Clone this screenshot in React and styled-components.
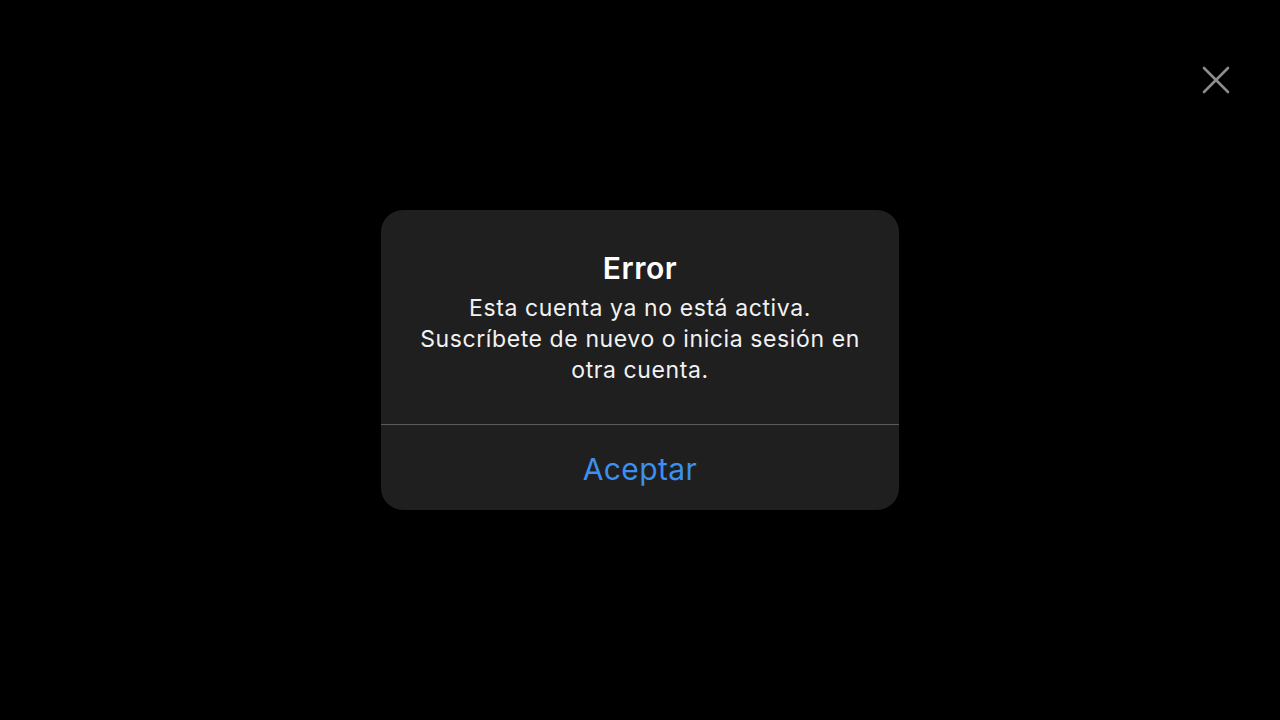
import React from "react";
import styled, { createGlobalStyle } from "styled-components";

const Global = createGlobalStyle`
  html, body {
    margin: 0;
    padding: 0;
    background: #000;
  }
  body {
    font-family: Inter, "Noto Sans", "DejaVu Sans", sans-serif;
  }
`;

const Screen = styled.div`
  position: relative;
  width: 1280px;
  height: 720px;
  background: #000;
  display: flex;
  align-items: center;
  justify-content: center;
`;

const CloseButton = styled.button`
  position: absolute;
  top: 66px;
  right: 50px;
  width: 28px;
  height: 28px;
  padding: 0;
  border: none;
  background: transparent;
  display: flex;
  align-items: center;
  justify-content: center;
`;

const Dialog = styled.div`
  width: 518px;
  height: 300px;
  background: #1f1f1f;
  border-radius: 22px;
  display: flex;
  flex-direction: column;
  overflow: hidden;
`;

const Body = styled.div`
  height: 215px;
  box-sizing: border-box;
  padding: 36px 20px 0;
  display: flex;
  flex-direction: column;
  align-items: center;
  text-align: center;
  border-bottom: 1px solid #5a5a5a;
`;

const Title = styled.h1`
  margin: 0;
  font-size: 30px;
  line-height: 44px;
  font-weight: 600;
  letter-spacing: 0.5px;
  color: #fff;
`;

const Message = styled.p`
  margin: 3px 0 0;
  font-size: 23px;
  line-height: 31px;
  font-weight: 400;
  letter-spacing: 0.6px;
  color: #f2f2f2;
  white-space: nowrap;
`;

const Action = styled.button`
  flex: 1;
  border: none;
  background: transparent;
  font-family: inherit;
  font-size: 30px;
  font-weight: 400;
  letter-spacing: 0.4px;
  color: #3d8ff0;
  padding: 3px 0 0;
`;

const CloseIcon = () => (
  <svg width="28" height="28" viewBox="0 0 28 28">
    <path d="M2 2 L26 26 M26 2 L2 26" stroke="#8c8c8c" strokeWidth="2.6" strokeLinecap="round" />
  </svg>
);

export default function App() {
  return (
    <>
      <Global />
      <Screen>
        <CloseButton aria-label="Cerrar">
          <CloseIcon />
        </CloseButton>
        <Dialog>
          <Body>
            <Title>Error</Title>
            <Message>
              Esta cuenta ya no está activa.
              <br />
              Suscríbete de nuevo o inicia sesión en
              <br />
              otra cuenta.
            </Message>
          </Body>
          <Action>Aceptar</Action>
        </Dialog>
      </Screen>
    </>
  );
}
